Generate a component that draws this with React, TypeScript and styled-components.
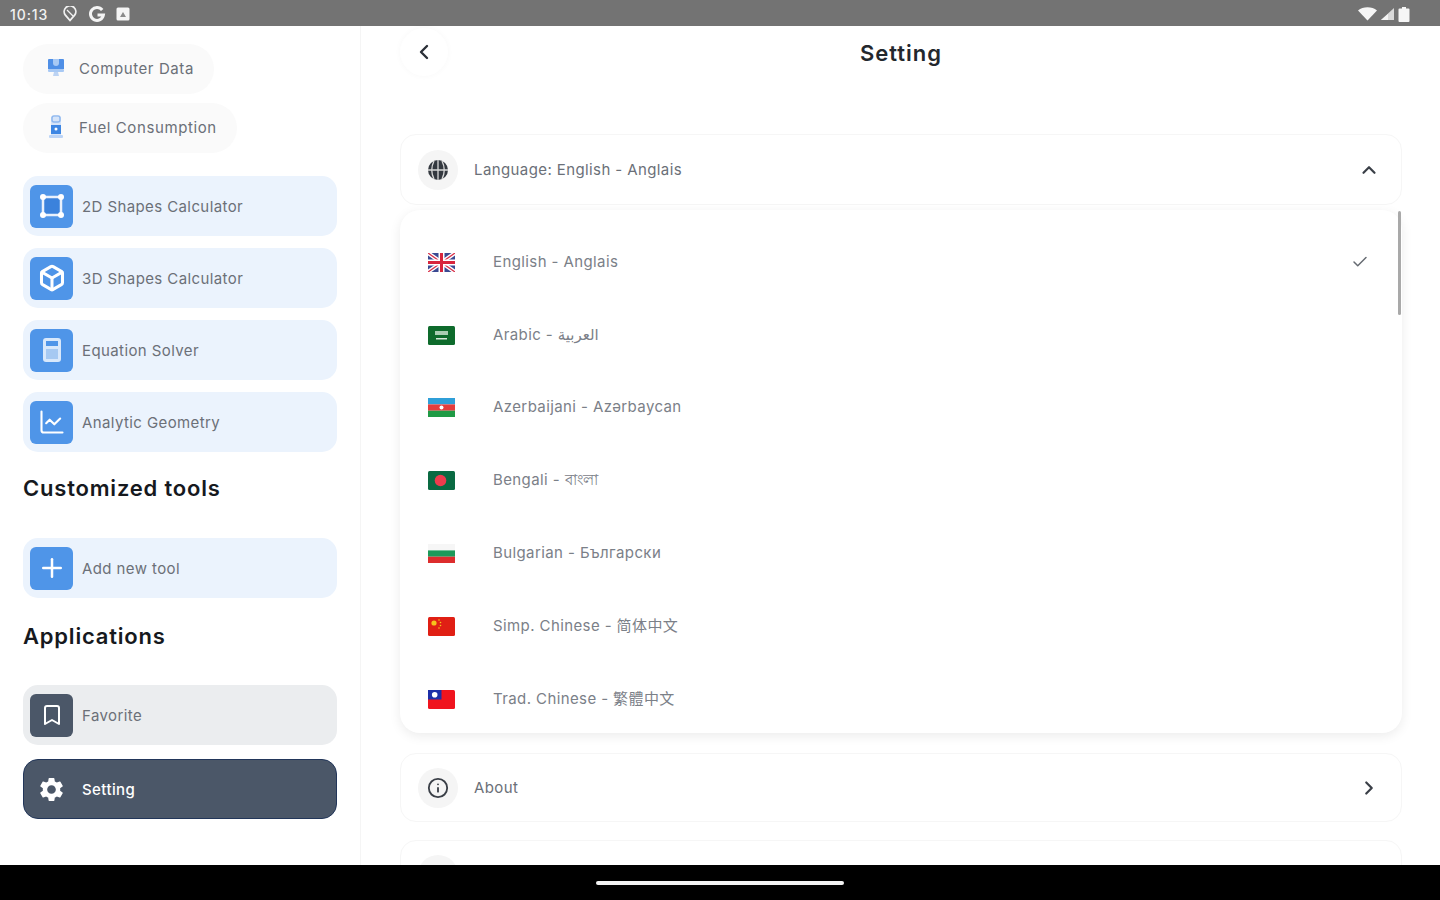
import React from "react";
import styled, { createGlobalStyle } from "styled-components";
import { Box, Bookmark, ChevronLeft, ChevronRight, ChevronUp, Check, Info, LineChart, Plus } from "lucide-react";
import { MdSettings } from "react-icons/md";

const GlobalStyle = createGlobalStyle`
  html, body {
    margin: 0;
    padding: 0;
    background: #fff;
    font-family: Inter, "Noto Sans", "Noto Sans CJK SC", sans-serif;
  }
  * { box-sizing: border-box; }
`;

const Screen = styled.div`
  width: 1440px;
  height: 900px;
  display: flex;
  flex-direction: column;
  overflow: hidden;
`;

const StatusBar = styled.div`
  height: 26px;
  flex: none;
  background: #737373;
  display: flex;
  align-items: center;
  justify-content: space-between;
  padding: 2px 30px 0 10px;
  color: #f1f1f1;
`;

const StatusGroup = styled.div<{ $gap: number }>`
  display: flex;
  align-items: center;
  gap: ${(p) => p.$gap}px;
`;

const StatusTime = styled.span`
  font-size: 14px;
  font-weight: 500;
  letter-spacing: 0.9px;
  margin-right: 4px;
`;

const Body = styled.div`
  flex: 1;
  min-height: 0;
  display: flex;
`;

const Sidebar = styled.aside`
  width: 361px;
  flex: none;
  border-right: 1px solid #f5f5f5;
  padding: 18px 23px 0;
  display: flex;
  flex-direction: column;
`;

const ChipList = styled.div`
  display: flex;
  flex-direction: column;
  align-items: flex-start;
  gap: 9px;
  margin-bottom: 23px;
`;

const Chip = styled.div`
  height: 50px;
  border-radius: 25px;
  background: #fafafa;
  display: flex;
  align-items: center;
  gap: 13px;
  padding: 0 20px 2px 23px;
  font-size: 15px;
  letter-spacing: 0.6px;
  color: #6b7078;
`;

const CardList = styled.div<{ $gap?: number }>`
  display: flex;
  flex-direction: column;
  gap: ${(p) => p.$gap ?? 12}px;
`;

const Card = styled.div<{ $tone?: "blue" | "gray" | "dark" }>`
  height: 60px;
  border-radius: 15px;
  padding: 0 8px 0 ${(p) => (p.$tone === "dark" ? 6 : 7)}px;
  display: flex;
  align-items: center;
  gap: 9px;
  font-size: 15px;
  letter-spacing: 0.4px;
  background: ${(p) => (p.$tone === "gray" ? "#ebedef" : p.$tone === "dark" ? "#4b5768" : "#ebf3fd")};
  color: ${(p) => (p.$tone === "dark" ? "#ffffff" : "#6b7078")};
  font-weight: ${(p) => (p.$tone === "dark" ? 500 : 400)};
  border: ${(p) => (p.$tone === "dark" ? "1px solid #22365a" : "none")};
`;

const CardIcon = styled.div<{ $color?: string }>`
  width: 43px;
  height: 43px;
  flex: none;
  border-radius: 6px;
  background: ${(p) => p.$color ?? "#4f95e8"};
  color: #fff;
  display: flex;
  align-items: center;
  justify-content: center;
`;

const SectionTitle = styled.h2<{ $top: number; $bottom: number }>`
  margin: ${(p) => p.$top}px 0 ${(p) => p.$bottom}px;
  font-size: 22px;
  line-height: 28px;
  font-weight: 600;
  letter-spacing: 0.8px;
  color: #16191e;
`;

const Main = styled.main`
  flex: 1;
  min-width: 0;
  padding: 0 38px 0 39px;
  display: flex;
  flex-direction: column;
`;

const Header = styled.header`
  height: 108px;
  flex: none;
  display: flex;
  align-items: flex-start;
  position: relative;
`;

const BackButton = styled.div`
  width: 48px;
  height: 48px;
  margin-top: 2px;
  border-radius: 50%;
  background: #fff;
  box-shadow: 0 0 6px rgba(0, 0, 0, 0.03);
  display: flex;
  align-items: center;
  justify-content: center;
  color: #2b3038;
`;

const Title = styled.h1`
  position: absolute;
  left: 0;
  right: 0;
  top: 12px;
  margin: 0;
  text-align: center;
  font-size: 22px;
  line-height: 30px;
  font-weight: 600;
  letter-spacing: 1px;
  color: #23272d;
`;

const SettingRow = styled.div<{ $height: number }>`
  height: ${(p) => p.$height}px;
  flex: none;
  border: 1px solid #f6f6f6;
  border-radius: 16px;
  padding: 0 21px 0 17px;
  display: flex;
  align-items: center;
  gap: 16px;
  font-size: 15px;
  letter-spacing: 0.4px;
  color: #6b7078;
`;

const RoundIcon = styled.div`
  width: 40px;
  height: 40px;
  flex: none;
  border-radius: 50%;
  background: #f5f5f5;
  color: #3a3f47;
  display: flex;
  align-items: center;
  justify-content: center;
`;

const RowLabel = styled.span`
  flex: 1;
`;

const RowEnd = styled.span`
  display: flex;
  color: #3a3f47;
`;

const LanguagePanel = styled.div`
  height: 523px;
  flex: none;
  margin: 5px 0 20px;
  border-radius: 20px;
  background: #fff;
  box-shadow: 0 3px 12px rgba(0, 0, 0, 0.08);
  padding: 16px 33px 0 28px;
  position: relative;
`;

const LanguageRow = styled.div`
  height: 72.8px;
  display: flex;
  align-items: center;
  gap: 38px;
`;

const LanguageName = styled.span`
  flex: 1;
  font-family: Inter, "DejaVu Sans", "Noto Sans CJK SC", sans-serif;
  font-size: 15px;
  line-height: 20px;
  letter-spacing: 0.4px;
  padding-bottom: 1px;
  color: #7b8088;
`;

const ScrollThumb = styled.div`
  position: absolute;
  top: 1px;
  right: 1px;
  width: 3px;
  height: 104px;
  background: #a9a9a9;
  border-radius: 2px;
`;

const NextRow = styled(SettingRow)`
  margin-top: 18px;
  align-items: flex-start;
  padding-top: 14px;
`;

const NavBar = styled.div`
  height: 35px;
  flex: none;
  background: #000;
  display: flex;
  justify-content: center;
  padding-top: 16px;
`;

const NavPill = styled.div`
  width: 248px;
  height: 4px;
  border-radius: 2px;
  background: #f2f2f2;
`;

const FrameIcon = () => (
  <svg width="30" height="30" viewBox="0 0 30 30">
    <rect x="6" y="6" width="18" height="18" fill="#3b82dc" stroke="#e9f1fc" strokeWidth="2.5" />
    {[[6, 6], [24, 6], [6, 24], [24, 24]].map(([x, y]) => (
      <circle key={`${x}-${y}`} cx={x} cy={y} r="3" fill="#fff" />
    ))}
  </svg>
);

const CalculatorIcon = () => (
  <svg width="26" height="28" viewBox="0 0 26 28">
    <rect x="4" y="2" width="18" height="24" rx="3" fill="#d8e8fb" />
    <rect x="7" y="5" width="12" height="5" fill="#4f95e8" />
    <rect x="7" y="13" width="12" height="10" fill="#a6c9f2" />
  </svg>
);

const ComputerIcon = () => (
  <svg width="20" height="22" viewBox="0 0 20 22">
    <path d="M3 2h14a1 1 0 0 1 1 1v9H2V3a1 1 0 0 1 1-1z" fill="#4f8fe6" />
    <path d="M7 2h6v4a3 3 0 0 1-6 0z" fill="#a8c9f4" />
    <rect x="2" y="12" width="16" height="3" rx="1" fill="#a8c9f4" />
    <path d="M8 15h4l1 4H7z" fill="#bcd3f3" />
  </svg>
);

const PumpIcon = () => (
  <svg width="20" height="26" viewBox="0 0 20 26">
    <path d="M5 3h10v20H5z" fill="#d5e4f9" />
    <rect x="6" y="2" width="8" height="6" rx="2" fill="none" stroke="#8fb8ef" strokeWidth="1.5" />
    <rect x="5" y="11" width="10" height="9" fill="#3d86e3" />
    <circle cx="10" cy="15" r="1.5" fill="#fff" />
    <rect x="3" y="21" width="14" height="3" rx="1" fill="#bcd4f6" />
  </svg>
);

const GlobeIcon = () => (
  <svg width="22" height="22" viewBox="0 0 22 22">
    <circle cx="11" cy="11" r="10" fill="#33383f" />
    <path d="M11 1v20M1 11h20M7 2c-3 6-3 12 0 18M15 2c3 6 3 12 0 18" fill="none" stroke="#d9d9d9" strokeWidth="1.3" />
  </svg>
);

const FlagUk = () => (
  <svg width="27" height="19" viewBox="0 0 27 19">
    <rect width="27" height="19" rx="1.5" fill="#3b4a92" />
    <path d="M0 0l27 19M27 0L0 19" stroke="#fff" strokeWidth="4" />
    <path d="M0 0l27 19M27 0L0 19" stroke="#d8324a" strokeWidth="1.3" />
    <path d="M13.5 0v19M0 9.5h27" stroke="#fff" strokeWidth="6" />
    <path d="M13.5 0v19M0 9.5h27" stroke="#d8253c" strokeWidth="3" />
  </svg>
);

const FlagSaudi = () => (
  <svg width="27" height="19" viewBox="0 0 27 19">
    <rect width="27" height="19" rx="1.5" fill="#0e6b2c" />
    <rect x="7" y="5" width="13" height="4" fill="#a9cdb2" />
    <rect x="8" y="12" width="11" height="1.5" fill="#d7e8da" />
  </svg>
);

const FlagAzerbaijan = () => (
  <svg width="27" height="19" viewBox="0 0 27 19">
    <rect width="27" height="6.4" fill="#2f9fd8" />
    <rect y="6.4" width="27" height="6.3" fill="#e43d3d" />
    <rect y="12.7" width="27" height="6.3" fill="#1f9a45" />
    <circle cx="13.5" cy="9.5" r="2" fill="#fff" />
  </svg>
);

const FlagBangladesh = () => (
  <svg width="27" height="19" viewBox="0 0 27 19">
    <rect width="27" height="19" rx="1.5" fill="#0a6a42" />
    <circle cx="12.5" cy="9.5" r="5.8" fill="#ef3b4d" />
  </svg>
);

const FlagBulgaria = () => (
  <svg width="27" height="19" viewBox="0 0 27 19">
    <rect width="27" height="6.4" fill="#f6f6f6" />
    <rect y="6.4" width="27" height="6.3" fill="#1d9a5a" />
    <rect y="12.7" width="27" height="6.3" fill="#dd2d2d" />
  </svg>
);

const FlagChina = () => (
  <svg width="27" height="19" viewBox="0 0 27 19">
    <rect width="27" height="19" rx="1.5" fill="#e01f14" />
    <circle cx="6" cy="6" r="2.6" fill="#f6c21c" />
    <circle cx="11" cy="3" r="0.8" fill="#f6c21c" />
    <circle cx="12.5" cy="5.5" r="0.8" fill="#f6c21c" />
    <circle cx="12.5" cy="8.5" r="0.8" fill="#f6c21c" />
    <circle cx="11" cy="11" r="0.8" fill="#f6c21c" />
  </svg>
);

const FlagTaiwan = () => (
  <svg width="27" height="19" viewBox="0 0 27 19">
    <rect width="27" height="19" rx="1.5" fill="#f0141e" />
    <rect width="13.5" height="9.5" fill="#1c2fa8" />
    <circle cx="6.7" cy="4.7" r="2.8" fill="#fff" />
  </svg>
);

const languages = [
  { name: "English - Anglais", Flag: FlagUk, selected: true },
  { name: "Arabic - العربية", Flag: FlagSaudi },
  { name: "Azerbaijani - Azərbaycan", Flag: FlagAzerbaijan },
  { name: "Bengali - বাংলা", Flag: FlagBangladesh },
  { name: "Bulgarian - Български", Flag: FlagBulgaria },
  { name: "Simp. Chinese - 简体中文", Flag: FlagChina },
  { name: "Trad. Chinese - 繁體中文", Flag: FlagTaiwan },
];

export default function App() {
  return (
    <Screen>
      <GlobalStyle />
      <StatusBar>
        <StatusGroup $gap={10}>
          <StatusTime>10:13</StatusTime>
          <svg width="16" height="16" viewBox="0 0 16 16" fill="none" stroke="#f1f1f1" strokeWidth="1.8">
            <path d="M8 14.5L3.4 9.2a5.8 5.8 0 1 1 9.2 0z" />
            <path d="M5 4l6 6" strokeWidth="1.2" />
          </svg>
          <svg width="18" height="18" viewBox="0 0 18 18" fill="none" stroke="#f4f4f4" strokeWidth="3">
            <path d="M14.2 5A6.5 6.5 0 1 0 15.4 10H9.5" />
          </svg>
          <svg width="14" height="14" viewBox="0 0 14 14">
            <rect x="0.5" y="0.5" width="13" height="13" rx="1.5" fill="#f4f4f4" />
            <path d="M4 10l3-5 3 5z" fill="#8a8a8a" />
          </svg>
        </StatusGroup>
        <StatusGroup $gap={3}>
          <svg width="19" height="14" viewBox="0 0 19 14">
            <path d="M0 3.5C5-.8 14-.8 19 3.5L9.5 13.5z" fill="#f6f6f6" />
          </svg>
          <svg width="15" height="14" viewBox="0 0 15 14">
            <path d="M14 1v12H1z" fill="#d9d9d9" />
            <path d="M8 7v6H1z" fill="#f4f4f4" />
          </svg>
          <svg width="12" height="15" viewBox="0 0 11 15">
            <path d="M3.5 0h4v1.5H10a1 1 0 0 1 1 1V14a1 1 0 0 1-1 1H1a1 1 0 0 1-1-1V2.5a1 1 0 0 1 1-1h2.5z" fill="#f6f6f6" />
          </svg>
        </StatusGroup>
      </StatusBar>

      <Body>
        <Sidebar>
          <ChipList>
            <Chip>
              <ComputerIcon />
              Computer Data
            </Chip>
            <Chip>
              <PumpIcon />
              Fuel Consumption
            </Chip>
          </ChipList>

          <CardList>
            <Card>
              <CardIcon>
                <FrameIcon />
              </CardIcon>
              2D Shapes Calculator
            </Card>
            <Card>
              <CardIcon>
                <Box size={28} strokeWidth={2.6} />
              </CardIcon>
              3D Shapes Calculator
            </Card>
            <Card>
              <CardIcon>
                <CalculatorIcon />
              </CardIcon>
              Equation Solver
            </Card>
            <Card>
              <CardIcon>
                <LineChart size={28} strokeWidth={1.8} />
              </CardIcon>
              Analytic Geometry
            </Card>
          </CardList>

          <SectionTitle $top={22} $bottom={36}>
            Customized tools
          </SectionTitle>
          <Card>
            <CardIcon>
              <Plus size={30} strokeWidth={2} />
            </CardIcon>
            Add new tool
          </Card>

          <SectionTitle $top={24} $bottom={35}>
            Applications
          </SectionTitle>
          <CardList $gap={14}>
            <Card $tone="gray">
              <CardIcon $color="#4b5768">
                <Bookmark size={24} strokeWidth={2} />
              </CardIcon>
              Favorite
            </Card>
            <Card $tone="dark">
              <CardIcon $color="transparent">
                <MdSettings size={29} />
              </CardIcon>
              Setting
            </Card>
          </CardList>
        </Sidebar>

        <Main>
          <Header>
            <BackButton>
              <ChevronLeft size={24} strokeWidth={2.4} />
            </BackButton>
            <Title>Setting</Title>
          </Header>

          <SettingRow $height={71}>
            <RoundIcon>
              <GlobeIcon />
            </RoundIcon>
            <RowLabel>Language: English - Anglais</RowLabel>
            <RowEnd>
              <ChevronUp size={22} strokeWidth={2.4} />
            </RowEnd>
          </SettingRow>

          <LanguagePanel>
            {languages.map(({ name, Flag, selected }) => (
              <LanguageRow key={name}>
                <Flag />
                <LanguageName>{name}</LanguageName>
                {selected && <Check size={18} color="#666b72" />}
              </LanguageRow>
            ))}
            <ScrollThumb />
          </LanguagePanel>

          <SettingRow $height={69}>
            <RoundIcon>
              <Info size={22} />
            </RoundIcon>
            <RowLabel>About</RowLabel>
            <RowEnd>
              <ChevronRight size={22} strokeWidth={2.4} />
            </RowEnd>
          </SettingRow>

          <NextRow $height={70}>
            <RoundIcon>
              <svg width="22" height="22" viewBox="0 0 24 24">
                <rect x="6" y="3" width="12" height="18" rx="2" fill="currentColor" />
              </svg>
            </RoundIcon>
          </NextRow>
        </Main>
      </Body>

      <NavBar>
        <NavPill />
      </NavBar>
    </Screen>
  );
}
